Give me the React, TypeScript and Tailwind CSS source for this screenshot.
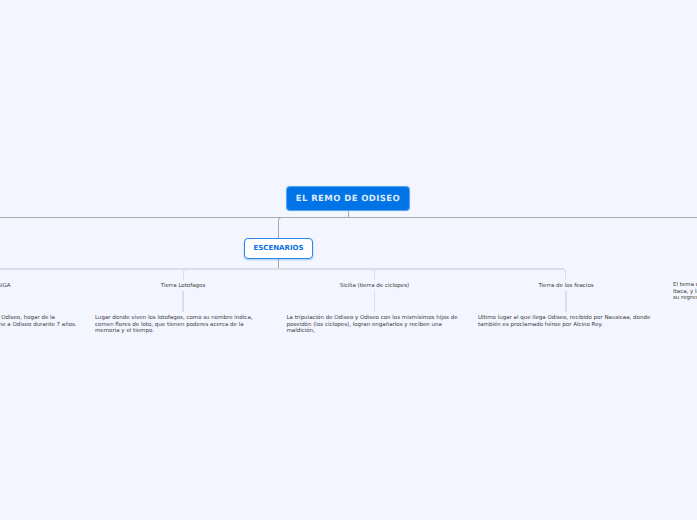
const font = "font-['DejaVu_Sans',sans-serif] [text-rendering:geometricPrecision]";

const branches = [
  {
    topic: 'Isla de OGIGA',
    lines: [
      'Isla de la ninfa Calipso donde llega Odiseo, hogar de la',
      'ninfa Calipso que enamorada retiene a Odiseo durante 7 años.',
    ],
  },
  {
    topic: 'Tierra Lotofagos',
    lines: [
      'Lugar donde viven los lotofagos, como su nombre indica,',
      'comen flores de loto, que tienen poderes acerca de la',
      'memoria y el tiempo.',
    ],
  },
  {
    topic: 'Sicilia (tierra de ciclopes)',
    lines: [
      'La tripulación de Odiseo y Odiseo con los mismísimos hijos de',
      'poseidón (los ciclopes), logran engañarlos y reciben una',
      'maldición,',
    ],
  },
  {
    topic: 'Tierra de los feacios',
    lines: [
      'Ultimo lugar al que llega Odiseo, recibido por Nausicaa, donde',
      'también es proclamado héroe por Alcino Rey.',
    ],
  },
];

function Branch({ topic, lines }: { topic: string; lines: string[] }) {
  return (
    <div className="w-[176px] shrink-0 flex flex-col text-[5.5px] leading-[6.7px] text-[#3a3a3a] whitespace-nowrap">
      <div className="h-[10px] flex items-center justify-center">{topic}</div>
      <div className="self-center w-[1.5px] h-[21px] bg-[#dcdee6]" />
      <div className="pt-[3px]">
        {lines.map((l) => (
          <div key={l}>{l}</div>
        ))}
      </div>
    </div>
  );
}

export default function App() {
  return (
    <div className={`relative w-[697px] h-[520px] overflow-hidden bg-[#f3f6ff] ${font}`}>
      {/* connectors */}
      <div className="absolute left-0 top-[217px] w-full h-px bg-[#a9a9a9]" />
      <div className="absolute left-[348px] top-[211px] w-px h-[6px] bg-[#a9a9a9]" />
      <div className="absolute left-[278px] top-[217px] w-[5px] h-[21px] border-l border-t border-[#a9a9a9] rounded-tl-[4px]" />
      <div className="absolute left-[278px] top-[259px] w-px h-[10px] bg-[#a9a9a9]" />
      <div className="absolute left-0 top-[268px] w-[374px] h-[2px] bg-[#dcdee6]" />
      <div className="absolute left-[183px] top-[268px] w-[6px] h-[12px] border-l-[1.5px] border-t-2 border-[#dcdee6] rounded-tl-[4px]" />
      <div className="absolute left-[368px] top-[268px] w-[7px] h-[12px] border-r-[1.5px] border-t-2 border-[#dcdee6] rounded-tr-[4px]" />
      <div className="absolute left-[374px] top-[268px] w-[192px] h-[12px] border-r-[1.5px] border-t-2 border-[#dcdee6] rounded-tr-[4px]" />

      {/* nodes */}
      <div className="absolute left-[286px] top-[186px] w-[124px] h-[25px] pt-[2px] rounded-[4px] bg-[#0073e6] border border-[#5aa5ee] shadow-[0_0_1px_#8fc0f5] flex items-center justify-center text-[8.5px] font-bold tracking-[0.4px] text-[#dcebff]">
        EL REMO DE ODISEO
      </div>
      <div className="absolute left-[244px] top-[238px] w-[69px] h-[21px] rounded-[4px] bg-white border border-[#2a86e8] shadow-[0_1px_2px_rgba(0,115,230,0.35)] flex items-center justify-center text-[7px] font-bold text-[#0a70e0]">
        ESCENARIOS
      </div>

      {/* branches */}
      <div className="absolute left-[-96.5px] top-[281px] flex gap-[15.5px]">
        {branches.map((b) => (
          <Branch key={b.topic} topic={b.topic} lines={b.lines} />
        ))}
        <div className="pl-[3.5px] pt-px text-[5.5px] leading-[6.7px] text-[#3a3a3a] whitespace-nowrap">
          <div>El tema del regreso a</div>
          <div>Itaca, y la lucha por</div>
          <div>su regreso a casa</div>
        </div>
      </div>
    </div>
  );
}
